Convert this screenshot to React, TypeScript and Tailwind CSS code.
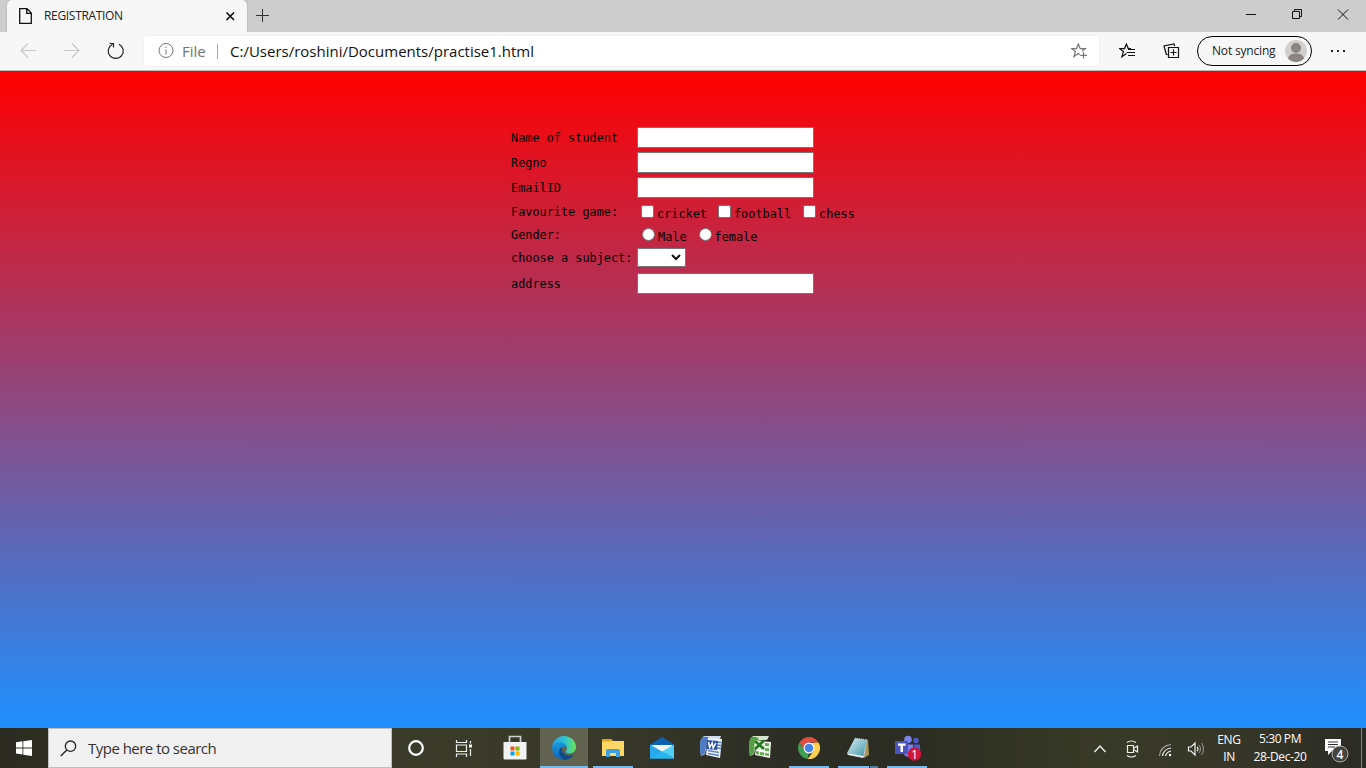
import React from "react";

const UI = "font-['Open_Sans','Noto_Sans',sans-serif] whitespace-nowrap";

function TextRow({ label, top }: { label: string; top: string }) {
  return (
    <div className={`flex h-[21px] items-center ${top}`}>
      <label className="w-[126px] leading-[20px]">{label}</label>
      <input className="h-[21px] w-[177px] rounded-[1px] border border-[#767676] bg-white outline-none" />
    </div>
  );
}

function Box({ label, gap, round }: { label: string; gap: string; round?: boolean }) {
  return (
    <label className={`flex items-center ${gap}`}>
      <span className={`h-[13px] w-[13px] shrink-0 border border-[#767676] bg-white ${round ? "rounded-full" : "rounded-[2px]"}`} />
      <span className="ml-[3px] pt-[5px] leading-[16px]">{label}</span>
    </label>
  );
}

function TabStrip() {
  return (
    <div className="flex h-[32px] items-stretch bg-[#cdcdcd]">
      <div className="w-[7px]" />
      <div className="flex w-[240px] items-center rounded-t-[5px] bg-[#f7f7f7] shadow-[0_0_2px_#999]">
        <svg className="ml-[11px]" width="15" height="18" viewBox="0 0 15 18" fill="none" stroke="#111" strokeWidth="1.3">
          <path d="M1.7 1.7h7.3l4.3 4.3v10.3H1.7zM8.7 1.7v4.6h4.6" />
        </svg>
        <span className={`ml-[11px] w-[150px] text-[12px] tracking-[-0.32px] text-[#222] ${UI}`}>REGISTRATION</span>
        <svg className="ml-[31px]" width="11" height="12" viewBox="0 0 11 12" stroke="#111" strokeWidth="1.7"><path d="m1.500 2.500 7.500 7.500m0-7.500-7.500 7.500" /></svg>
      </div>
      <svg className="mt-[8px] ml-[8px]" width="15" height="15" viewBox="0 0 15 15" stroke="#333" strokeWidth="1"><path d="M7.500 1v13M1 7.500h13" /></svg>
      <div className="mt-[7px] ml-auto flex">
        <svg width="116" height="15" viewBox="0 0 116 15" fill="none" stroke="#111" strokeWidth="1">
          <path d="M12 7.500h10" />
          <path d="M58.500 4.500h7v7h-7zM60.500 4.500v-2h7v7h-2" />
          <path d="m104 2.500 10 10m0-10-10 10" />
        </svg>
        <span className="w-[16px]" />
      </div>
    </div>
  );
}

function Toolbar() {
  return (
    <div className="flex h-[39px] items-center border-b border-[#b9bcb9] bg-[#f7f7f7]">
      <svg width="144" height="38" viewBox="0 32 144 38" fill="none" stroke="#c7c7c7" strokeWidth="1.1">
        <path d="M36 50.500H21m7-7-7 7 7 7M64 50.500h15m-7-7 7 7-7 7" />
        <path d="M119 44.200a7.500 7.500 0 1 1-6.500 0M109.500 43.500h4v4" stroke="#222" strokeWidth="1.200" />
      </svg>
      <div className="flex h-[30px] w-[955px] items-center rounded-[3px] bg-white shadow-[0_0_2px_#e5e5e5]">
        <svg className="ml-[14px]" width="16" height="16" viewBox="0 0 16 16" fill="none" stroke="#737373"><circle cx="8" cy="7.500" r="7" /><path d="M8 6.500v5M8 3.500v1.500" /></svg>
        <span className={`ml-[8px] w-[24px] pt-[1px] text-[15px] text-[#737373] ${UI}`}>File</span>
        <span className="ml-[11px] h-[15px] w-px bg-[#aaa]" />
        <span className={`ml-[12px] pt-[1px] text-[15px] text-[#111] ${UI}`}>C:/Users/roshini/Documents/practise1.html</span>
        <svg className="mr-[11px] ml-auto" width="17" height="17" viewBox="0 0 17 17" fill="none" stroke="#777" strokeWidth="1.200">
          <path d="m9 11.800-1.800-1.200-4.300 3.200 1.500-5.300-3.600-2.900h4.700l1.900-4.600 1.800 4.600h5L11 8M12.500 9v6.500M9.300 12.300H16" />
        </svg>
      </div>
      <svg className="ml-[20px]" width="17" height="17" viewBox="0 0 17 17" fill="none" stroke="#111" strokeWidth="1.200"><path d="m7.500 10.500-4.600 3.300 1.500-5.300L.8 5.600h4.700L7.400 1l1.900 4.600h2.700" /><path d="M9 6.500h7M7.500 9.500H16M9 12.500h7" /></svg>
      <svg className="ml-[27px]" width="18" height="17" viewBox="0 0 18 17" fill="none" stroke="#111" strokeWidth="1.200"><path d="M5.500 4.500h10v10h-10zM10.500 6.500v6M7.500 9.500h6M4.500 11.800 3.200 11 1 3l10-2 .7 2" /></svg>
      <div className="ml-[16px] flex h-[30px] w-[115px] items-center rounded-full border border-black bg-[#f7f7f7]">
        <span className={`ml-[14px] w-[73px] text-[12px] tracking-[-0.18px] text-[#222] ${UI}`}>Not syncing</span>
        <svg width="22" height="22" viewBox="0 0 22 22"><circle cx="11" cy="11" r="11" fill="#d2d0ce" /><circle cx="11" cy="8" r="5" fill="#8a8583" /><path d="M3 18.500c1-4 4-5 8-5s7 1 8 5a11 11 0 0 1-16 0" fill="#8a8583" /></svg>
      </div>
      <svg className="ml-[18px]" width="17" height="4" viewBox="0 0 17 4"><path d="M1 1h2v2H1zm6 0h2v2h-2zm6 0h2v2h-2z" fill="#222" /></svg>
    </div>
  );
}

function TaskIcon({ children, running, active }: { children: React.ReactNode; running?: boolean; active?: boolean }) {
  return (
    <div className={`flex h-[40px] w-[48px] flex-col items-center ${active ? "bg-[#61624f]" : ""}`}>
      <div className="flex h-[38px] items-center pt-[2px]">{children}</div>
      {running && <div className={`h-[2px] bg-[#76b9ed] ${active ? "w-[48px]" : "w-[40px]"}`} />}
    </div>
  );
}

function Taskbar() {
  return (
    <div className="flex h-[40px] bg-[linear-gradient(90deg,#2b2b21_0%,#2d2d22_4%,#3a3b28_30%,#37382a_45%,#2c2d23_58%,#2b2c22_66%,#383a27_80%,#363728_90%,#2b2b25_100%)]">
      <div className="flex w-[48px] items-center justify-center">
        <svg width="16" height="16" viewBox="0 0 16 16" fill="white"><path d="M0 2.300 6.500 1.300v6.200H0zM7.300 1.200 16 0v7.500H7.300zM0 8.400h6.500v6.100L0 13.600zM7.300 8.400H16V16l-8.700-1.200z" /></svg>
      </div>
      <div className="flex w-[344px] items-center border border-[#bfbfbf] bg-[#f1f1f1]">
        <svg className="ml-[11px]" width="17" height="17" viewBox="0 0 17 17" fill="none" stroke="#222" strokeWidth="1.3"><circle cx="10.500" cy="6.200" r="5.200" /><path d="m6.800 10-6 6" /></svg>
        <span className={`ml-[11px] text-[15px] tracking-[-0.52px] text-[#333] ${UI}`}>Type here to search</span>
      </div>
      <TaskIcon><svg width="16" height="16" viewBox="0 0 16 16"><circle cx="8" cy="8" r="6.800" fill="none" stroke="white" strokeWidth="2.200" /></svg></TaskIcon>
      <TaskIcon><svg className="-ml-[1px]" width="17" height="17" viewBox="0 0 17 17" fill="none" stroke="#eee" strokeWidth="1.2"><path d="M1.500 0v2.500h10V0M1.500 5h10v6.500h-10zM1.500 17v-3h10v3M15.500 1v2.500M15.500 9v7" /><path d="M14 4.500h3v3h-3z" fill="white" stroke="none" /></svg></TaskIcon>
      <div className="ml-[3px] flex gap-px">
        <TaskIcon><svg className="-ml-[1px]" width="24" height="26" viewBox="0 0 24 26"><path d="M6.500 8V1.500h11V8" fill="none" stroke="#d0d0d0" strokeWidth="1.700" /><path d="M.5 7h23v16.500q0 1-1 1h-21q-1 0-1-1z" fill="#f2f2f2" /><path d="M7.500 11.500h4v4h-4z" fill="#f25022" /><path d="M12.500 11.500h4v4h-4z" fill="#7fba00" /><path d="M7.500 16.500h4v4h-4z" fill="#00a4ef" /><path d="M12.500 16.500h4v4h-4z" fill="#ffb900" /></svg></TaskIcon>
        <TaskIcon running active>
          <svg width="24" height="24" viewBox="0 0 24 24">
            <defs>
              <linearGradient id="eg"><stop stopColor="#229ce2" /><stop offset=".55" stopColor="#2ec6d0" /><stop offset="1" stopColor="#6be052" /></linearGradient>
              <linearGradient id="eb" x2="0" y2="1"><stop stopColor="#189bdd" /><stop offset="1" stopColor="#1462b8" /></linearGradient>
            </defs>
            <path d="M0 11C1 4 5.500 0 12 0c7 0 12 5 12 11 0 4-3 6.500-6.500 6.500-3 0-4.500-1.200-3.500-2.500 3-4-1-8-6-8-4 0-7 1.500-8 4" fill="url(#eg)" />
            <path d="M0 12C0 8.500 4 6 8 6c4 0 6.500 2.500 6.700 5-4-2-6.700 1.500-5.200 5.500 1.500 4.500 6 6 11.500 3.300A12 12 0 0 1 0 12" fill="url(#eb)" />
            <path d="M9.500 11c-4 3-3 10 3 12.900 3.500 0 7-2 9-5.400-6 3-10.500-.5-11.500-4z" fill="#114a8b" />
          </svg>
        </TaskIcon>
        <TaskIcon running><svg width="22" height="20" viewBox="0 0 22 20"><path d="M0 1h9l2 2h11v15H0z" fill="#ffd766" /><path d="M0 1h9l1 2.500H0z" fill="#e9a414" /><path d="M4 19v-6q0-2 2-2h10q2 0 2 2v6h-4v-4H8v4z" fill="#3d9fe0" /></svg></TaskIcon>
        <TaskIcon><svg width="24" height="24" viewBox="0 0 24 24"><path d="M0 8.500 12 1l12 7.500V15H0z" fill="#0b62b5" /><path d="M2 9h20v8H2z" fill="#f3f3f3" /><path d="M0 8.500 24 22.500H0z" fill="#28a8ea" /><path d="M24 8.500v14l-12-7z" fill="#50d0f5" /><path d="m0 22.500 12-7 12 7z" fill="#25b5ef" /></svg></TaskIcon>
        <TaskIcon>
          <svg className="-mt-[2px]" width="24" height="24" viewBox="0 0 24 24">
            <path d="M5 1h17l-1 3H9L6 19l-4 2Q-1 5 5 1" fill="#cfdcf0" />
            <path d="M4 2Q9 1 11 4 7 6 6 18l-4 3Q-1 6 4 2" fill="#4f7bc4" />
            <path d="m9 3 14 1-2 19-14-3z" fill="#eef3fc" />
            <path d="m18 7 4 .5m-4 2.500 4 .5m-4 2.500 4 .5m-13 2 11 2m-11 1 11 2" stroke="#5f82c2" strokeWidth="1.300" />
            <path d="m8 5 11 1-1 9-11-1z" fill="#2e55a5" />
            <path d="m9.500 7 1.200 5.500 2.500-4.500 1 5 2.600-5" fill="none" stroke="white" strokeWidth="1.500" />
          </svg>
        </TaskIcon>
        <TaskIcon>
          <svg className="-mt-[2px]" width="24" height="24" viewBox="0 0 24 24">
            <path d="M5 1h16l-2 4H9L6 19l-4 2Q-1 5 5 1" fill="#d5e6cf" />
            <path d="M4 2Q9 1 11 4 7 6 6 18l-4 3Q-1 6 4 2" fill="#55a044" />
            <path d="m9 6 14 1-1 16-15-3z" fill="#f4f8f1" />
            <path d="m17 8 4 .3v3l-4-.3zm0 5 4 .3v3l-4-.3zm0 5 4 .5v2.500l-4-.5zm-5-1 4 .5v3l-4-.5zm-4-1 3 .5v3l-3-.5z" fill="#64aa55" />
            <path d="m7 5 10 1-1 9-10-1z" fill="#e3efdb" />
            <path d="m7 6 9 8m0-8.500-9 8.500" stroke="#287822" strokeWidth="2.800" />
          </svg>
        </TaskIcon>
        <TaskIcon running><svg width="22" height="22" viewBox="0 0 22 22"><path d="M1.500 5.500A11 11 0 0 1 20.500 5.500H11L6.200 13.700z" fill="#df4b3e" /><path d="M1.500 5.500 6.200 13.700 11 16.500 9.500 21.900A11 11 0 0 1 1.500 5.500" fill="#3c9f52" /><path d="M20.500 5.500A11 11 0 0 1 9.500 21.900L15.800 13.700 13 6z" fill="#ffd050" /><circle cx="11" cy="11" r="5.500" fill="white" /><circle cx="11" cy="11" r="4.300" fill="#4285e8" /></svg></TaskIcon>
        <div className="flex h-[40px] w-[48px] flex-col items-center">
          <div className="flex h-[38px] items-center pt-[2px]">
            <svg width="23" height="22" viewBox="0 0 23 22"><defs><linearGradient id="np" x2="1" y2="1"><stop stopColor="#dcf3f5" /><stop offset="1" stopColor="#3d92a8" /></linearGradient></defs><path d="m19 2 2 1 1 15-5 3z" fill="#a89358" /><path d="m8 1 12 2-4 17L0 16z" fill="url(#np)" /><path d="m0 16 16 3v2L1 18z" fill="#e7edec" /><path d="m20 3-3 18-1-1z" fill="#eee" /><path d="m8 1.500 12 1.500" stroke="#c4ccc8" strokeWidth="1.500" strokeDasharray="1 1" /></svg>
          </div>
          <div className="flex h-[2px] w-[40px]"><span className="w-[31px] bg-[#76b9ed]" /><span className="ml-px w-[8px] bg-[#527d9d]" /></div>
        </div>
        <TaskIcon running>
          <svg className="ml-[2px]" width="26" height="26" viewBox="0 0 26 26"><circle cx="13" cy="4.500" r="3.800" fill="#7b83eb" /><circle cx="21" cy="5.500" r="2.700" fill="#5059c9" /><path d="M8 9.500h10v11q-8 4-10-4z" fill="#7b83eb" /><path d="M18.500 9.500H25v7q-2 4-6 2z" fill="#5059c9" /><path d="M0 6h13v13H0z" fill="#4b53bc" /><path d="M3 8.500h7.500v2.200H8V17H5.500v-6.300H3z" fill="white" /><circle cx="19.500" cy="19" r="6.700" fill="#d31638" /><text x="19.500" y="23.500" textAnchor="middle" fontSize="12.500" fontFamily="Open Sans" fill="white">1</text></svg>
        </TaskIcon>
      </div>
      <div className={`ml-auto flex items-center text-[12px] text-white ${UI}`}>
        <svg className="mt-[1px]" width="112" height="20" viewBox="0 0 112 20" fill="none" stroke="#eee" strokeWidth="1.200">
          <path d="m1.500 13 5.500-6 5.500 6" strokeWidth="1.400" />
          <path d="M34.500 6.500h6v7h-6zM41 9l3.500-2v6L41 11M34 3.500q4-3 9 0M34 16.500q4 3 9 0" />
          <path d="M66.500 17Q67 7 78 5.500" stroke="#aaa" /><path d="M69.500 17q1-7 8.500-8M72.500 17q1-4 5.500-5" />
          <circle cx="77" cy="16" r="1.200" fill="white" stroke="none" />
          <path d="M95.500 8H98l4-4v12l-4-4h-2.500zM104 8q2 2 0 4" /><path d="M106 6q3 4 0 8M108.500 4q4 6 0 12" stroke="#8b8b83" />
        </svg>
        <div className="ml-[12px] w-[24px] pb-[1px] text-center leading-[17px] tracking-[-0.35px]"><div className="-mx-[4px]">ENG</div><div>IN</div></div>
        <div className="ml-[11px] w-[56px] pb-[1px] text-center leading-[18px] tracking-[-0.4px]"><div className="-mx-[6px]">5:30 PM</div><div className="-mx-[6px]">28-Dec-20</div></div>
        <svg className="mt-[3px] ml-[16px]" width="26" height="28" viewBox="0 0 26 28"><path d="M1 3h16v12H8l-4 4v-4H1z" fill="white" /><path d="M4 6h10M4 8.500h10M4 11h7" stroke="#333" /><circle cx="16" cy="18" r="8" fill="#44443c" stroke="#aaa" /><text x="16" y="22.500" fontSize="12" textAnchor="middle" fontFamily="Open Sans" fontWeight="600" fill="white">4</text></svg>
        <span className="ml-[11px] h-[40px] w-px bg-[#85857c]" /><span className="w-[4px]" />
      </div>
    </div>
  );
}

export default function App() {
  return (
    <div className="flex h-[768px] w-[1366px] flex-col overflow-hidden">
      <TabStrip />
      <Toolbar />
      <main className="flex-1 bg-[linear-gradient(red,dodgerblue)] pt-[56px] pl-[511px] font-['DejaVu_Sans_Mono',monospace] text-[11.87px] whitespace-nowrap text-black">
        <TextRow label="Name of student" top="" />
        <TextRow label="Regno" top="mt-[4px]" />
        <TextRow label="EmailID" top="mt-[4px]" />
        <div className="mt-[4px] flex h-[19px] items-center">
          <span className="w-[130px] pt-[2px] leading-[19px]">Favourite game:</span>
          <Box label="cricket" gap="" /><Box label="football" gap="ml-[11px]" /><Box label="chess" gap="ml-[12px]" />
        </div>
        <div className="mt-[4px] flex h-[19px] items-center">
          <span className="w-[131px] pt-[2px] leading-[19px]">Gender:</span>
          <Box label="Male" gap="" round /><Box label="female" gap="ml-[12px]" round />
        </div>
        <div className="mt-[4px] flex h-[19px] items-center">
          <span className="w-[126px] pt-[2px] leading-[19px]">choose a subject:</span>
          <div className="flex h-[19px] w-[49px] items-center justify-end rounded-[1px] border border-[#767676] bg-white pr-[4px]">
            <svg width="10" height="7" viewBox="0 0 10 7" fill="none" stroke="#111" strokeWidth="2"><path d="m1 1 4 4 4-4" /></svg>
          </div>
        </div>
        <TextRow label="address" top="mt-[6px]" />
      </main>
      <Taskbar />
    </div>
  );
}
